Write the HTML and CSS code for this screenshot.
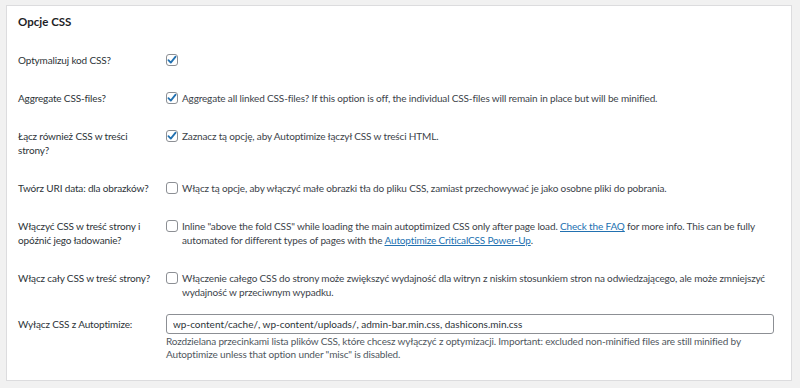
FILE: index.html
```html
<!DOCTYPE html>
<html lang="pl">
<head>
    <meta charset="UTF-8">
    <meta name="viewport" content="width=device-width, initial-scale=1.0">
    <title>Opcje CSS</title>
    <link rel="stylesheet" href="styles.css">
</head>
<body>
    <div class="panel">
        <h2 class="panel-title">Opcje CSS</h2>

        <div class="form-rows">
            <div class="row">
                <div class="label">Optymalizuj kod CSS?</div>
                <div class="field">
                    <span class="checkbox checked"></span>
                </div>
            </div>

            <div class="row">
                <div class="label">Aggregate CSS-files?</div>
                <div class="field">
                    <span class="checkbox checked"></span>
                    <span class="desc">Aggregate all linked CSS-files? If this option is off, the individual CSS-files will remain in place but will be minified.</span>
                </div>
            </div>

            <div class="row">
                <div class="label">Łącz również CSS w treści strony?</div>
                <div class="field">
                    <span class="checkbox checked"></span>
                    <span class="desc">Zaznacz tą opcję, aby Autoptimize łączył CSS w treści HTML.</span>
                </div>
            </div>

            <div class="row">
                <div class="label">Twórz URI data: dla obrazków?</div>
                <div class="field">
                    <span class="checkbox"></span>
                    <span class="desc">Włącz tą opcje, aby włączyć małe obrazki tła do pliku CSS, zamiast przechowywać je jako osobne pliki do pobrania.</span>
                </div>
            </div>

            <div class="row">
                <div class="label">Włączyć CSS w treść strony i opóźnić jego ładowanie?</div>
                <div class="field">
                    <span class="checkbox"></span>
                    <span class="desc">Inline "above the fold CSS" while loading the main autoptimized CSS only after page load. <a href="#">Check the FAQ</a> for more info. This can be fully automated for different types of pages with the <a href="#">Autoptimize CriticalCSS Power-Up</a>.</span>
                </div>
            </div>

            <div class="row">
                <div class="label">Włącz cały CSS w treść strony?</div>
                <div class="field">
                    <span class="checkbox"></span>
                    <span class="desc">Włączenie całego CSS do strony może zwiększyć wydajność dla witryn z niskim stosunkiem stron na odwiedzającego, ale może zmniejszyć wydajność w przeciwnym wypadku.</span>
                </div>
            </div>

            <div class="row row-input">
                <div class="label">Wyłącz CSS z Autoptimize:</div>
                <div class="field field-stack">
                    <input class="text-input" type="text" value="wp-content/cache/, wp-content/uploads/, admin-bar.min.css, dashicons.min.css">
                    <p class="note">Rozdzielana przecinkami lista plików CSS, które chcesz wyłączyć z optymizacji. Important: excluded non-minified files are still minified by Autoptimize unless that option under "misc" is disabled.</p>
                </div>
            </div>
        </div>
    </div>
</body>
</html>
```

FILE: styles.css
```css
html, body {
    margin: 0;
    padding: 0;
    background: #f1f1f1;
    font-family: Lato, 'Noto Sans', sans-serif;
    font-size: 10px;
    letter-spacing: -0.15px;
    color: #3c434a;
}

.panel {
    margin: 5px 8px 7px 6px;
    padding: 0 17px 0 11px;
    background: #fff;
    border: 1px solid #dcdcde;
    height: 376px;
    box-sizing: border-box;
}

.panel-title {
    margin: 0;
    padding: 8px 0 0;
    font-size: 11.5px;
    line-height: 16px;
    font-weight: 700;
    letter-spacing: 0;
    color: #1d2327;
}

.form-rows {
    margin-top: 11px;
}

.row {
    display: grid;
    grid-template-columns: 148px 1fr;
    padding: 12px 0;
    line-height: 14px;
}

.row-input {
    padding: 3px 0 0;
}

.label {
    color: #2c3338;
    padding-right: 8px;
}

.row-input .label {
    padding-top: 3px;
}

.field {
    display: flex;
    align-items: flex-start;
    gap: 4px;
}

.field-stack {
    flex-direction: column;
    gap: 0;
}

.checkbox {
    flex: none;
    width: 12px;
    height: 12px;
    margin-top: 1px;
    border: 1px solid #8c8f94;
    border-radius: 3px;
    box-sizing: border-box;
    background: #fff;
}

.checkbox.checked {
    background: #fff url("data:image/svg+xml;utf8,<svg xmlns='http://www.w3.org/2000/svg' viewBox='0 0 12 12'><path d='M2.4 6.2 L4.8 8.6 L9.6 2.6' fill='none' stroke='%232271b1' stroke-width='1.8' stroke-linecap='round' stroke-linejoin='round'/></svg>") center / 12px 12px no-repeat;
}

.desc a {
    color: #2271b1;
}

.text-input {
    width: 100%;
    height: 20px;
    box-sizing: border-box;
    border: 1px solid #8c8f94;
    border-radius: 3px;
    padding: 0 6px;
    font: inherit;
    color: #2c3338;
    background: #fff;
}

.note {
    margin: 1px 0 0;
    line-height: 13px;
    color: #50575e;
}
```
